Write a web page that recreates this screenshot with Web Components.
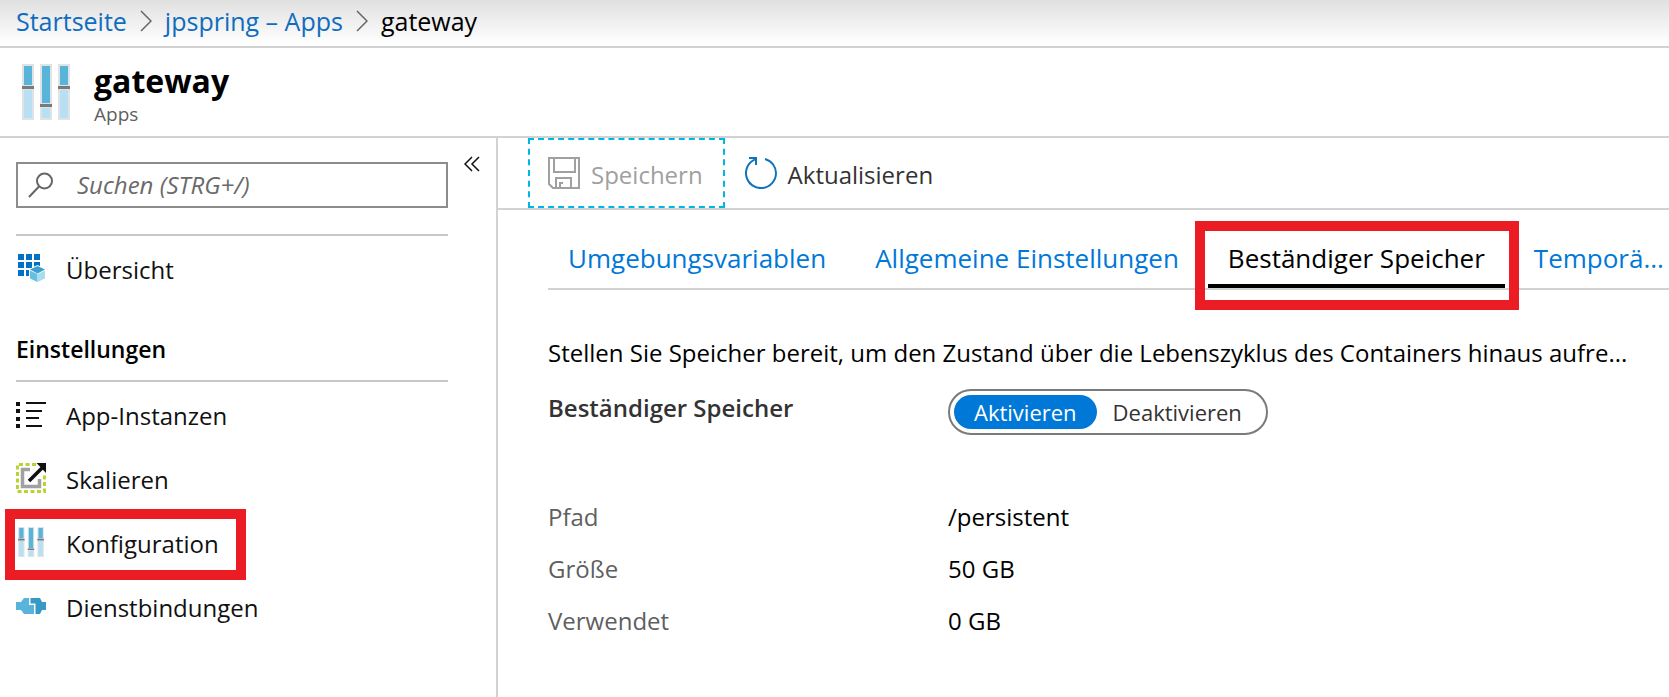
<!DOCTYPE html>
<html lang="de">
<head>
<meta charset="utf-8">
<title>gateway – Konfiguration</title>
<style>
  body {
    margin: 0;
    background: #fff;
    color: #000;
    font: 24px/32px "Open Sans", "Noto Sans", sans-serif;
    --line: #d2d2d2;
    --rule: #c8c8c8;
    --link: #0f6cbf;
    --accent: #0078d7;
    --muted: #5f5f5f;
    --mark: #ec1c24;
  }
</style>
</head>
<body>
<portal-page>
  <bread-crumbs slot="crumbs"></bread-crumbs>
  <blade-title slot="title" heading="gateway" kind="Apps"></blade-title>
  <side-menu slot="menu">
    <menu-item slot="top" icon="overview">Übersicht</menu-item>
    <menu-item icon="list">App-Instanzen</menu-item>
    <menu-item icon="scale">Skalieren</menu-item>
    <menu-item icon="sliders" marked>Konfiguration</menu-item>
    <menu-item icon="plug">Dienstbindungen</menu-item>
  </side-menu>
  <command-bar>
    <command-button icon="save" disabled focused>Speichern</command-button>
    <command-button icon="refresh">Aktualisieren</command-button>
  </command-bar>
  <tab-strip>
    <tab-link>Umgebungsvariablen</tab-link>
    <tab-link>Allgemeine Einstellungen</tab-link>
    <tab-link active>Beständiger Speicher</tab-link>
    <tab-link>Temporä...</tab-link>
  </tab-strip>
  <storage-panel></storage-panel>
</portal-page>

<script>
const define = (name, html, setup) => {
  const template = document.createElement('template');
  template.innerHTML = html;
  customElements.define(name, class extends HTMLElement {
    connectedCallback() {
      if (this.shadowRoot) return;
      const root = this.attachShadow({ mode: 'open' });
      root.append(template.content.cloneNode(true));
      if (setup) setup(this, root);
    }
  });
};

const ICONS = {
  sliders: ['0 0 48 56', `
    <g fill="#dfe3e6"><path d="M0 0h12v56H0zM18 0h12v56H18zM36 0h12v56H36z"/></g>
    <g fill="#59b4d9"><path d="M2 2h8v19H2zM20 2h8v37h-8zM38 2h8v19h-8z"/></g>
    <g fill="#b8e0f2"><path d="M2 26h8v28H2zM20 44h8v10h-8zM38 26h8v28h-8z"/></g>
    <g fill="#7a7a7a"><path d="M0 22h12v3H0zM18 40h12v3H18zM36 22h12v3H36z"/></g>`],
  overview: ['0 0 30 30', `
    <path fill="#0072c6" d="M2 1h6v6H2zM10 1h6v6h-6zM18 1h6v6h-6zM2 9h6v6H2zM10 9h6v6h-6zM18 9h6v6h-6zM2 17h6v6H2zM10 17h6v6h-6z"/>
    <path fill="#fff" d="M21.500 12L30 16v9.500L21.500 30 13 25.500V16z"/>
    <path fill="#3c9fd0" d="M21.500 13L29 16.500 21.500 20.500 14 16.500z"/>
    <path fill="#69bfe2" d="M14 17.500l7.500 3.500V29L14 25.500z"/>
    <path fill="#a9dcf0" d="M21.500 21l7.500-3.500v8L21.500 29z"/>`],
  list: ['0 0 30 30', `
    <path fill="#111" d="M0 3h4v4H0zM0 10h4v4H0zM0 18h4v4H0zM0 25h4v4H0zM10 3h20v2H10zM10 11h16v2H10zM10 18h13v2H10zM10 26h16v2H10z"/>`],
  scale: ['0 0 30 30', `
    <path fill="none" stroke="#b8d432" stroke-width="3" stroke-dasharray="4 2.500" d="M20 1.500H1.500v27h27V10"/>
    <path fill="none" stroke="#a0a1a2" stroke-width="3.500" d="M14 6.500H6.500v17h17V16"/>
    <path stroke="#111" stroke-width="3.500" d="M13 18L26 5"/>
    <path fill="#111" d="M20.500 0H30v10z"/>`],
  plug: ['0 0 30 30', `
    <path fill="#59b4d9" d="M0 11h5l3-4h5v7h5v9H8l-3-4H0z"/>
    <path fill="#3999c6" d="M14.500 7H24l2 4h4v8h-4l-2 4h-4.500V12.500h-5z"/>`],
  save: ['0 0 32 32', `
    <g fill="none" stroke="#a0a0a0" stroke-width="2"><path d="M1 1h30v30H5l-4-4zM6 1v14h21V1M8 31V21h15v10M12 31v-5h3"/></g>`],
  refresh: ['0 0 32 32', `
    <g fill="none" stroke="#0f74bd" stroke-width="2"><path d="M20 2C27 4 31 10 31 16a15 15 0 1 1-21-13.700"/><path d="M4 1h7v7"/></g>`],
  chevron: ['0 0 12 22', `<path fill="none" stroke="#666" stroke-width="1.500" d="M1 1l10 10L1 21"/>`],
  collapse: ['0 0 16 16', `<path fill="none" stroke="#111" stroke-width="1.500" d="M8 1L1 8l7 7M15 1L8 8l7 7"/>`],
  search: ['0 0 26 26', `<g fill="none" stroke="#666" stroke-width="2"><circle cx="16.500" cy="9" r="7.500"/><path d="M11 14.500L1 25"/></g>`]
};

define('ui-icon', `
  <style>:host { display: block; flex: none; } svg { display: block; width: 100%; height: 100%; }</style>
  <svg aria-hidden="true"></svg>`, (host, root) => {
  const [box, body] = ICONS[host.getAttribute('name')];
  const svg = root.querySelector('svg');
  svg.setAttribute('viewBox', box);
  svg.innerHTML = body;
});

const prependIcon = (host, parent) => {
  const icon = document.createElement('ui-icon');
  icon.setAttribute('name', host.getAttribute('icon'));
  parent.prepend(icon);
};

define('portal-page', `
  <style>
    :host { display: flex; flex-direction: column; min-height: 100vh; }
    .body { flex: 1; display: flex; }
    ::slotted([slot=menu]) { flex: none; }
    main { flex: 1; min-width: 0; overflow: hidden; }
  </style>
  <slot name="crumbs"></slot>
  <slot name="title"></slot>
  <div class="body"><slot name="menu"></slot><main><slot></slot></main></div>`);

define('bread-crumbs', `
  <style>
    :host { display: block; background: linear-gradient(#e0e0e0, #fff 44px); border-bottom: 2px solid var(--line); }
    nav { display: flex; align-items: center; gap: 13px; height: 42px; padding: 0 16px 4px; font-size: 25px; }
    a { color: var(--link); text-decoration: none; }
    ui-icon { width: 12px; height: 22px; }
  </style>
  <nav aria-label="Brotkrumen">
    <a href="#">Startseite</a><ui-icon name="chevron"></ui-icon>
    <a href="#">jpspring – Apps</a><ui-icon name="chevron"></ui-icon>
    <span aria-current="page">gateway</span>
  </nav>`);

define('blade-title', `
  <style>
    :host { display: flex; gap: 24px; padding: 13px 22px 9px; border-bottom: 2px solid var(--line); }
    ui-icon { width: 48px; height: 56px; margin-top: 3px; }
    h1 { margin: 0; font-size: 32px; line-height: 40px; font-weight: 700; }
    p { margin: 0; font-size: 19px; line-height: 26px; color: var(--muted); }
  </style>
  <ui-icon name="sliders"></ui-icon>
  <div><h1></h1><p></p></div>`, (host, root) => {
  root.querySelector('h1').textContent = host.getAttribute('heading');
  root.querySelector('p').textContent = host.getAttribute('kind');
});

define('side-menu', `
  <style>
    :host { display: block; box-sizing: border-box; width: 498px; padding: 24px 0 0 16px; border-right: 2px solid var(--line); }
    .top { display: flex; align-items: flex-start; gap: 16px; }
    label { box-sizing: border-box; width: 432px; height: 46px; display: flex; align-items: center; gap: 23px; padding: 0 10px; border: 2px solid #8c8c8c; }
    label ui-icon { width: 26px; height: 26px; }
    input { flex: 1; min-width: 0; border: 0; padding: 0; outline: 0; background: none; color: #000; font: italic 24px/32px "Open Sans", "Noto Sans", sans-serif; }
    input::placeholder { color: #6a6a6a; opacity: 1; }
    button { margin: -6px 0 0; padding: 0; border: 0; background: none; }
    button ui-icon { width: 16px; height: 16px; }
    hr { width: 432px; height: 2px; margin: 0 0 2px; border: 0; background: var(--rule); }
    .top + hr { margin-top: 26px; }
    h2 { margin: 0; padding: 31px 0 15px; font-size: 23px; line-height: 32px; font-weight: 600; }
  </style>
  <div class="top">
    <label><ui-icon name="search"></ui-icon><input type="search" placeholder="Suchen (STRG+/)" aria-label="Suchen"></label>
    <button type="button" aria-label="Menü einklappen"><ui-icon name="collapse"></ui-icon></button>
  </div>
  <hr>
  <slot name="top"></slot>
  <h2>Einstellungen</h2>
  <hr>
  <nav><slot></slot></nav>`);

define('menu-item', `
  <style>
    :host { display: block; }
    a { position: relative; display: inline-flex; align-items: center; gap: 20px; height: 64px; color: #111; text-decoration: none; }
    ui-icon { width: 30px; height: 30px; margin-bottom: 4px; }
    :host([marked]) a::after { content: ""; position: absolute; inset: -3px -27px -4px -11px; border: 10px solid var(--mark); }
  </style>
  <a href="#"><slot></slot></a>`, (host, root) => prependIcon(host, root.querySelector('a')));

define('command-bar', `
  <style>:host { display: flex; height: 70px; padding-left: 30px; border-bottom: 2px solid var(--line); }</style>
  <slot></slot>`);

define('command-button', `
  <style>
    :host { display: block; }
    button { box-sizing: border-box; height: 100%; display: flex; align-items: center; gap: 11px; padding: 0 18px; border: 2px solid transparent; background: none; color: #333; font: inherit; }
    :host([disabled]) button { color: #a0a0a0; }
    :host([focused]) button { padding-right: 20px; border: 2px dashed #00b7e5; }
    ui-icon { width: 32px; height: 32px; }
    span { padding-top: 4px; }
  </style>
  <button type="button"><span><slot></slot></span></button>`, (host, root) => {
  const button = root.querySelector('button');
  prependIcon(host, button);
  button.disabled = host.hasAttribute('disabled');
});

define('tab-strip', `
  <style>:host { display: flex; gap: 9px; margin: 30px 0 0 50px; border-bottom: 2px solid var(--line); white-space: nowrap; }</style>
  <slot></slot>`);

define('tab-link', `
  <style>
    :host { display: block; position: relative; flex: none; }
    a { display: block; padding: 0 20px 8px; border-bottom: 4px solid transparent; color: var(--accent); text-decoration: none; font-size: 26px; line-height: 36px; }
    :host([active]) a { color: #000; border-color: #000; }
    :host([active])::after { content: ""; position: absolute; inset: -19px -14px -22px -13px; border: 10px solid var(--mark); }
  </style>
  <a href="#"><slot></slot></a>`);

define('storage-panel', `
  <style>
    :host { display: block; padding: 47px 16px 24px 50px; }
    p { margin: 0; white-space: nowrap; overflow: hidden; text-overflow: ellipsis; }
    .row { display: grid; grid-template-columns: 400px 1fr; margin-top: 20px; }
    .name { font-weight: 600; color: #333; padding-top: 3px; }
    dl { display: grid; grid-template-columns: 400px 1fr; row-gap: 20px; margin: 66px 0 0; }
    dt { color: var(--muted); }
    dd { margin: 0; }
  </style>
  <p>Stellen Sie Speicher bereit, um den Zustand über die Lebenszyklus des Containers hinaus aufre...</p>
  <div class="row"><span class="name">Beständiger Speicher</span><toggle-pair></toggle-pair></div>
  <dl>
    <dt>Pfad</dt><dd>/persistent</dd>
    <dt>Größe</dt><dd>50 GB</dd>
    <dt>Verwendet</dt><dd>0 GB</dd>
  </dl>`);

define('toggle-pair', `
  <style>
    :host { display: block; justify-self: start; }
    fieldset { display: flex; margin: 0; padding: 4px; border: 2px solid #7a7a7a; border-radius: 23px; }
    label { position: relative; padding: 0 20px; border-radius: 17px; font-size: 22px; line-height: 34px; color: #333; }
    label + label { padding-left: 16px; }
    label:has(:checked) { background: var(--accent); color: #fff; }
    input { position: absolute; inset: 0; margin: 0; opacity: 0; }
  </style>
  <fieldset aria-label="Beständiger Speicher">
    <label><input type="radio" name="state" checked>Aktivieren</label>
    <label><input type="radio" name="state">Deaktivieren</label>
  </fieldset>`);
</script>
</body>
</html>
